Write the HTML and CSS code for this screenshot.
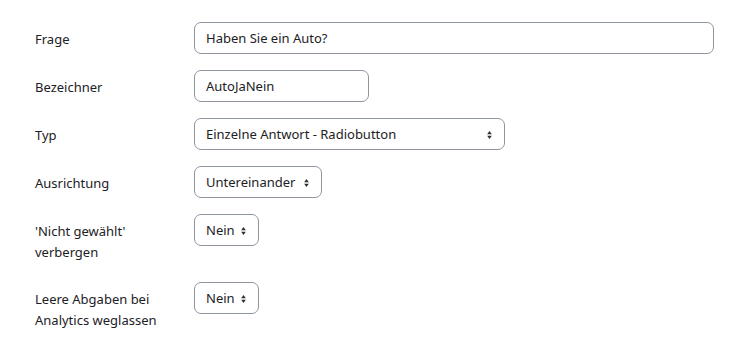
FILE: index.html
```html
<!DOCTYPE html>
<html lang="de">
<head>
<meta charset="utf-8">
<title>Frage</title>
<link rel="stylesheet" href="styles.css">
</head>
<body>
<form class="form">
  <div class="row">
    <label class="label" for="f1">Frage</label>
    <div class="field"><input id="f1" class="control w-full" type="text" value="Haben Sie ein Auto?"></div>
  </div>
  <div class="row">
    <label class="label" for="f2">Bezeichner</label>
    <div class="field"><input id="f2" class="control w-name" type="text" value="AutoJaNein"></div>
  </div>
  <div class="row">
    <label class="label" for="f3">Typ</label>
    <div class="field">
      <span class="select w-typ">
        <select id="f3" class="control"><option>Einzelne Antwort - Radiobutton</option></select>
        <svg class="arrow" viewBox="0 0 6 10" aria-hidden="true"><path d="M3 0.3 L5.8 4.2 H0.2 Z M3 9.7 L5.8 5.8 H0.2 Z" fill="#2b3035"/></svg>
      </span>
    </div>
  </div>
  <div class="row">
    <label class="label" for="f4">Ausrichtung</label>
    <div class="field">
      <span class="select w-aus">
        <select id="f4" class="control"><option>Untereinander</option></select>
        <svg class="arrow" viewBox="0 0 6 10" aria-hidden="true"><path d="M3 0.3 L5.8 4.2 H0.2 Z M3 9.7 L5.8 5.8 H0.2 Z" fill="#2b3035"/></svg>
      </span>
    </div>
  </div>
  <div class="row">
    <label class="label" for="f5">'Nicht gewählt' verbergen</label>
    <div class="field">
      <span class="select w-nein">
        <select id="f5" class="control"><option>Nein</option></select>
        <svg class="arrow" viewBox="0 0 6 10" aria-hidden="true"><path d="M3 0.3 L5.8 4.2 H0.2 Z M3 9.7 L5.8 5.8 H0.2 Z" fill="#2b3035"/></svg>
      </span>
    </div>
  </div>
  <div class="row">
    <label class="label" for="f6">Leere Abgaben bei Analytics weglassen</label>
    <div class="field">
      <span class="select w-nein">
        <select id="f6" class="control"><option>Nein</option></select>
        <svg class="arrow" viewBox="0 0 6 10" aria-hidden="true"><path d="M3 0.3 L5.8 4.2 H0.2 Z M3 9.7 L5.8 5.8 H0.2 Z" fill="#2b3035"/></svg>
      </span>
    </div>
  </div>
</form>
</body>
</html>
```

FILE: styles.css
```css
* { box-sizing: border-box; }

html, body {
  margin: 0;
  padding: 0;
  background: #ffffff;
}

body {
  font-family: "Noto Sans", "Open Sans", "Liberation Sans", sans-serif;
  font-size: 13px;
  line-height: 21px;
  color: #1d2125;
}

.form {
  padding: 22px 0 0 35px;
}

.row {
  display: grid;
  grid-template-columns: 159px 520px;
  margin-bottom: 16px;
}

.label {
  padding: 7px 20px 3px 0;
}

.field {
  display: flex;
  align-items: flex-start;
}

.control {
  display: block;
  height: 32px;
  margin: 0;
  padding: 0 11px;
  font: inherit;
  color: #1d2125;
  background: #ffffff;
  border: 1px solid #8f959e;
  border-radius: 7px;
  outline: none;
}

.w-full { width: 520px; }
.w-name { width: 175px; }

.select {
  position: relative;
  display: block;
}

.select .control {
  width: 100%;
  -webkit-appearance: none;
  appearance: none;
  padding-right: 16px;
}

.select .arrow {
  position: absolute;
  top: 12px;
  right: 13px;
  width: 5px;
  height: 10px;
  pointer-events: none;
}

.w-typ { width: 311px; }
.w-aus { width: 128px; }
.w-nein { width: 65px; }
```
